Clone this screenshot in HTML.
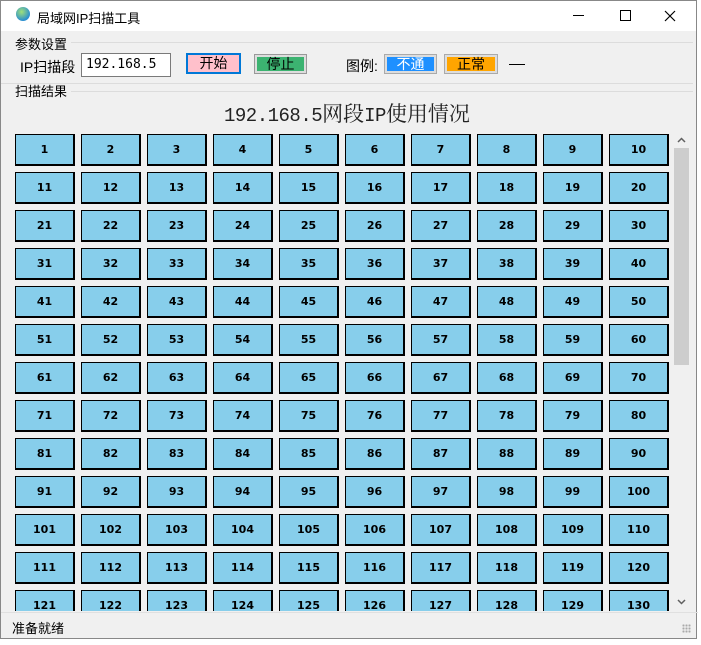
<!DOCTYPE html>
<html><head><meta charset="utf-8"><style>
*{margin:0;padding:0;box-sizing:border-box}
body{width:701px;height:645px;background:#fff;font-family:"Liberation Sans","Noto Sans CJK SC",sans-serif;font-size:13px;position:relative;overflow:hidden;color:#000}
.win{position:absolute;left:0;top:0;width:697px;height:639px;border:1px solid #888;background:#f0f0f0}
.title{position:absolute;left:0;top:0;width:695px;height:30px;background:#fff}
.a{position:absolute;white-space:nowrap}
.grid{position:absolute;left:14px;top:133px;width:656px;height:477px;overflow:hidden;display:grid;grid-template-columns:repeat(10,60px);grid-auto-rows:32px;gap:6px}
.grid div{background:#87ceeb;border:1px solid #000;border-right-width:2px;border-bottom-width:2px;font:bold 11px "DejaVu Sans",sans-serif;display:flex;align-items:center;justify-content:center}
</style></head><body>
<div class="win">
<div class="title">
<div class="a" style="left:15px;top:6px;width:14px;height:14px;border-radius:50%;background:radial-gradient(circle at 40% 35%,#9fe07a,#2a8fd0 70%)"></div>
<div class="a" style="left:36px;top:7px;font-size:13px">局域网IP扫描工具</div>
<div class="a" style="left:572px;top:14px;width:11px;height:1px;background:#000"></div>
<div class="a" style="left:619px;top:9px;width:11px;height:11px;border:1px solid #000"></div>
<svg class="a" style="left:663px;top:9px" width="12" height="12"><path d="M1 1L11 11M11 1L1 11" stroke="#000" stroke-width="1.2"/></svg>
</div>
<div class="a" style="left:14px;top:33px">参数设置</div>
<div class="a" style="left:70px;top:41px;width:622px;height:1px;background:#dcdcdc"></div>
<div class="a" style="left:19px;top:56px;font-size:14px">IP扫描段</div>
<div class="a" style="left:80px;top:52px;width:90px;height:24px;background:#fff;border:1px solid #7a7a7a;padding:3px 4px;font:13px 'DejaVu Sans Mono','Liberation Mono',monospace">192.168.5</div>
<div class="a" style="left:185px;top:52px;width:55px;height:21px;border:2px solid #0078d7;background:#ffc0cb;text-align:center;font-size:14px;line-height:17px">开始</div>
<div class="a" style="left:253px;top:53px;width:53px;height:20px;border:1px solid #999;background:#3cb371;text-align:center;font-size:14px;line-height:18px;box-shadow:inset 0 0 0 2px #ddd">停止</div>
<div class="a" style="left:345px;top:55px;font-size:14px">图例:</div>
<div class="a" style="left:383px;top:53px;width:53px;height:20px;border:1px solid #aaa;background:#1e90ff;color:#fff;text-align:center;font-size:14px;line-height:18px;box-shadow:inset 0 0 0 2px #ddd">不通</div>
<div class="a" style="left:443px;top:53px;width:54px;height:20px;border:1px solid #aaa;background:#ffa500;text-align:center;font-size:14px;line-height:18px;box-shadow:inset 0 0 0 2px #ddd">正常</div>
<div class="a" style="left:508px;top:63px;width:16px;height:1px;background:#000"></div>
<div class="a" style="left:0;top:82px;width:692px;height:1px;background:#dcdcdc"></div>
<div class="a" style="left:14px;top:80px">扫描结果</div>
<div class="a" style="left:70px;top:90px;width:622px;height:1px;background:#dcdcdc"></div>
<div class="a" style="left:223px;top:97px;font:21px 'Liberation Serif','Noto Serif CJK SC',serif;color:#222"><span style="font:19px 'Liberation Mono',monospace;letter-spacing:-0.5px">192.168.5</span>网段<span style="font:19px 'Liberation Mono',monospace;letter-spacing:-0.5px">IP</span>使用情况</div>
<div class="grid">
<div>1</div><div>2</div><div>3</div><div>4</div><div>5</div><div>6</div><div>7</div><div>8</div><div>9</div><div>10</div>
<div>11</div><div>12</div><div>13</div><div>14</div><div>15</div><div>16</div><div>17</div><div>18</div><div>19</div><div>20</div>
<div>21</div><div>22</div><div>23</div><div>24</div><div>25</div><div>26</div><div>27</div><div>28</div><div>29</div><div>30</div>
<div>31</div><div>32</div><div>33</div><div>34</div><div>35</div><div>36</div><div>37</div><div>38</div><div>39</div><div>40</div>
<div>41</div><div>42</div><div>43</div><div>44</div><div>45</div><div>46</div><div>47</div><div>48</div><div>49</div><div>50</div>
<div>51</div><div>52</div><div>53</div><div>54</div><div>55</div><div>56</div><div>57</div><div>58</div><div>59</div><div>60</div>
<div>61</div><div>62</div><div>63</div><div>64</div><div>65</div><div>66</div><div>67</div><div>68</div><div>69</div><div>70</div>
<div>71</div><div>72</div><div>73</div><div>74</div><div>75</div><div>76</div><div>77</div><div>78</div><div>79</div><div>80</div>
<div>81</div><div>82</div><div>83</div><div>84</div><div>85</div><div>86</div><div>87</div><div>88</div><div>89</div><div>90</div>
<div>91</div><div>92</div><div>93</div><div>94</div><div>95</div><div>96</div><div>97</div><div>98</div><div>99</div><div>100</div>
<div>101</div><div>102</div><div>103</div><div>104</div><div>105</div><div>106</div><div>107</div><div>108</div><div>109</div><div>110</div>
<div>111</div><div>112</div><div>113</div><div>114</div><div>115</div><div>116</div><div>117</div><div>118</div><div>119</div><div>120</div>
<div>121</div><div>122</div><div>123</div><div>124</div><div>125</div><div>126</div><div>127</div><div>128</div><div>129</div><div>130</div>
</div>
<div class="a" style="left:672px;top:132px;width:17px;height:478px;background:#f0f0f0"></div>
<svg class="a" style="left:676px;top:136px" width="9" height="6"><path d="M1 5L4.5 1.5L8 5" stroke="#606060" stroke-width="1.5" fill="none"/></svg>
<div class="a" style="left:673px;top:147px;width:15px;height:217px;background:#cdcdcd"></div>
<svg class="a" style="left:676px;top:598px" width="9" height="6"><path d="M1 1L4.5 4.5L8 1" stroke="#606060" stroke-width="1.5" fill="none"/></svg>
<div class="a" style="left:0;top:611px;width:697px;height:1px;background:#e0e0e0"></div>
<div class="a" style="left:11px;top:617px">准备就绪</div>
<div class="a" style="left:681px;top:623px;width:9px;height:9px;background:radial-gradient(circle,#aaa 1px,transparent 1.2px) 0 0/3px 3px"></div>
</div>
</body></html>
